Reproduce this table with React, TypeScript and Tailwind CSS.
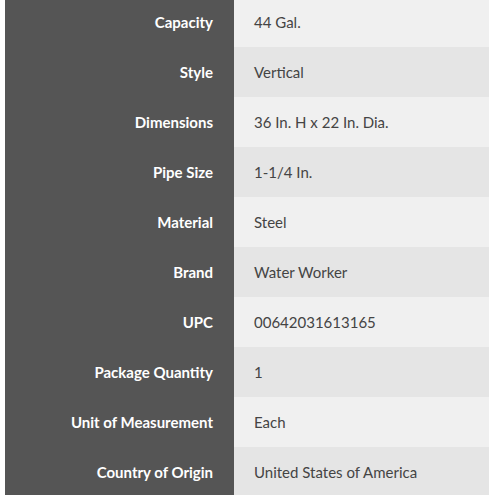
const specs: [string, string][] = [
  ["Capacity", "44 Gal."],
  ["Style", "Vertical"],
  ["Dimensions", "36 In. H x 22 In. Dia."],
  ["Pipe Size", "1-1/4 In."],
  ["Material", "Steel"],
  ["Brand", "Water Worker"],
  ["UPC", "00642031613165"],
  ["Package Quantity", "1"],
  ["Unit of Measurement", "Each"],
  ["Country of Origin", "United States of America"],
];

export default function App() {
  return (
    <div
      className="w-[495px] h-[495px] overflow-hidden bg-white pl-[5px] pr-[6px]"
      style={{ fontFamily: "Lato, 'Open Sans', sans-serif" }}
    >
      <div className="-mt-[3px]">
        {specs.map(([label, value], i) => (
          <div key={label} className="grid grid-cols-[229px_1fr] h-[50px]">
            <div className="bg-[#555555] text-white font-bold text-[15px] flex items-center justify-end pr-[21px]">
              {label}
            </div>
            <div
              className={
                "text-[#444444] text-[15px] flex items-center pl-[20px] " +
                (i % 2 === 0 ? "bg-[#f0f0f0]" : "bg-[#e5e5e5]")
              }
            >
              {value}
            </div>
          </div>
        ))}
      </div>
    </div>
  );
}
